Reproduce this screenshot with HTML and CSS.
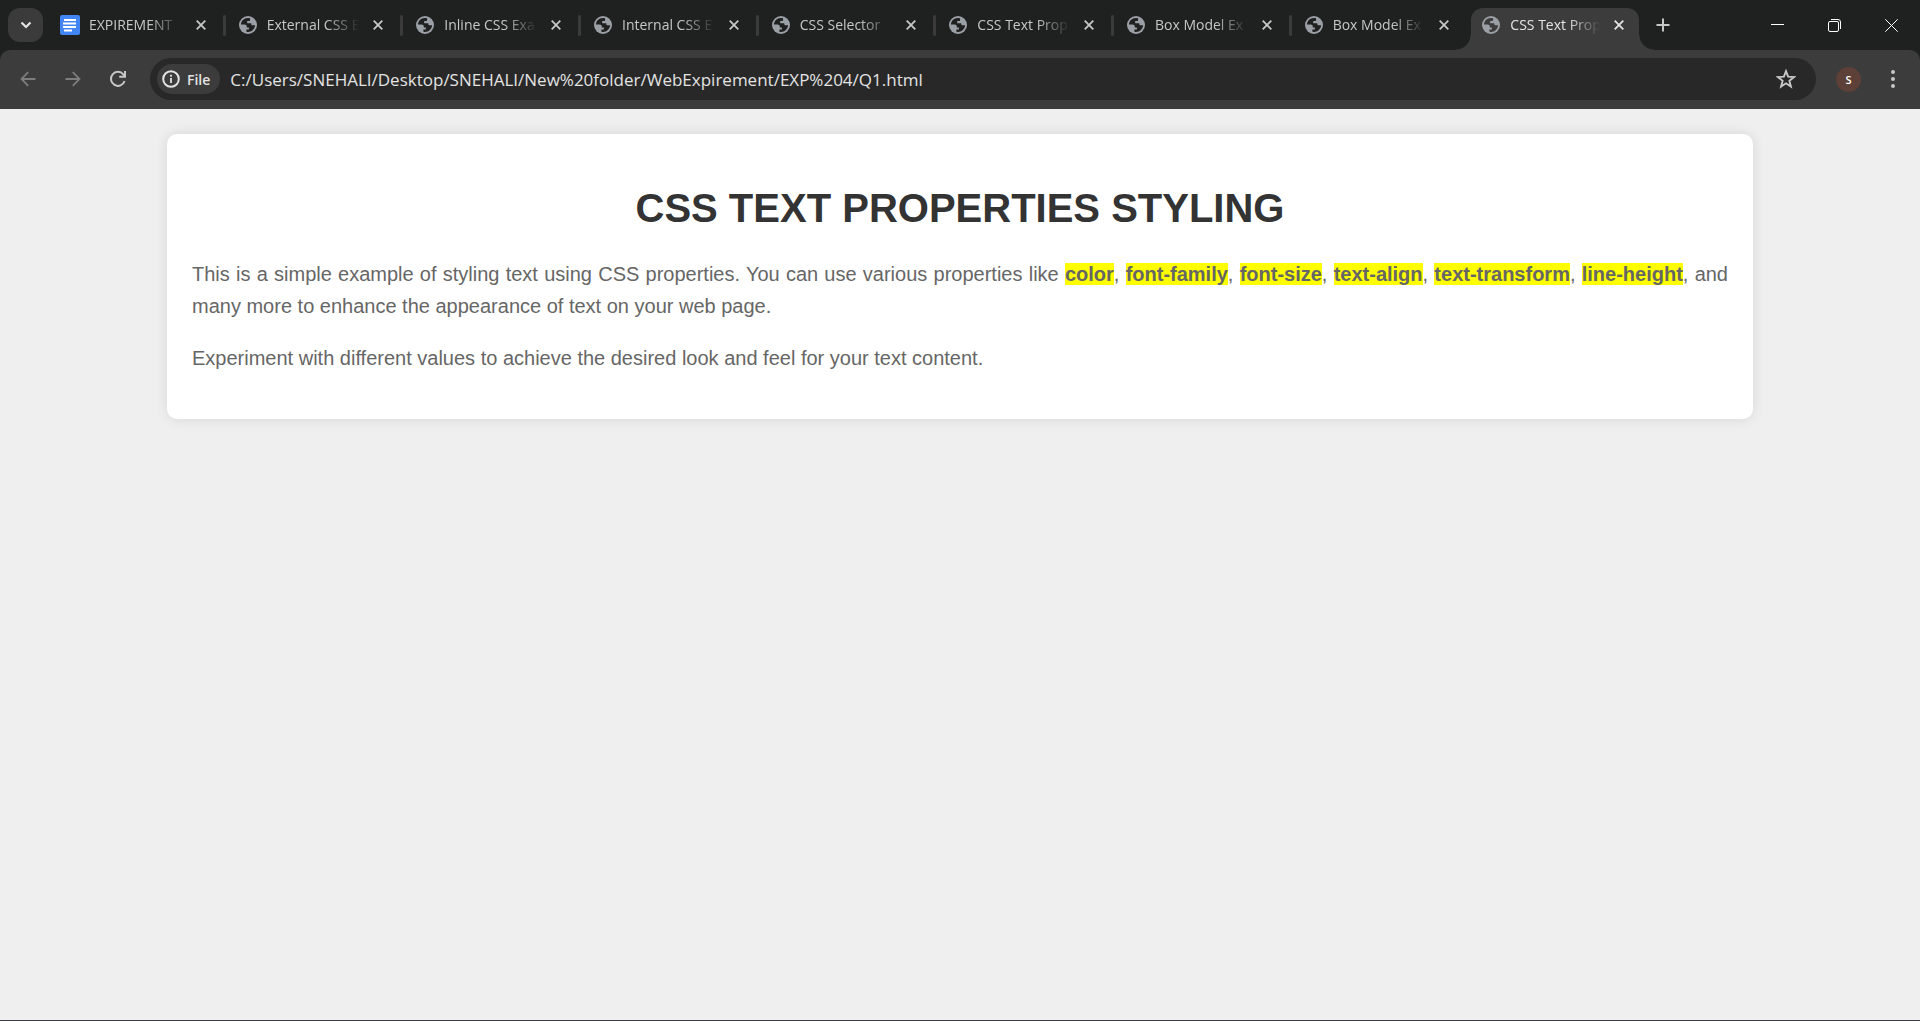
FILE: index.html
```html
<!DOCTYPE html>
<html lang="en">
<head>
<meta charset="utf-8">
<title>CSS Text Properties Styling</title>
<link rel="stylesheet" href="styles.css">
</head>
<body>
<svg class="sprite" aria-hidden="true">
  <symbol id="globe" viewBox="0 0 18 18">
    <circle cx="9" cy="9" r="9" fill="#9aa0a6"/>
    <path class="land" d="M9.2 1.9C5 1.700 2 5 1.900 8.600h3.600c1.500 0 2.300.8 2.300 2.100v.8h2.100v2.100H7.400v2.200c3.900 1.100 8.400-1.900 8.700-6.500h-2.300c-.9 0-1.500-.5-1.500-1.400v-.7H8.200V5.100h1.700c.8 0 1.200-.4 1.200-1.100V2.200Z"/>
  </symbol>
  <symbol id="cross" viewBox="0 0 10 10">
    <path d="M.7.7l8.600 8.600M9.300.7L.7 9.300" fill="none" stroke="currentColor" stroke-width="1.800"/>
  </symbol>
</svg>

<header class="browser">
  <div class="tabstrip">
    <button class="search-tabs" aria-label="Search tabs">
      <svg width="12" height="8" viewBox="0 0 12 8"><path d="M1.500 1.500L6 6l4.500-4.500" fill="none" stroke="#e3e3e3" stroke-width="2.200"/></svg>
    </button>
    <div class="tabs">
      <div class="tab">
        <svg class="favicon docs" viewBox="0 0 20 20"><rect width="20" height="20" rx="2" fill="#4285f4"/><path d="M4 5h12M3 8.500h13M3 12h13M4 15.500h8" stroke="#fff" stroke-width="2"/></svg>
        <button class="tab-title">EXPIREMENT</button>
        <button class="tab-close" aria-label="Close tab"><svg><use href="#cross"/></svg></button>
      </div>
      <div class="tab">
        <svg class="favicon"><use href="#globe"/></svg>
        <button class="tab-title">External CSS E</button>
        <button class="tab-close" aria-label="Close tab"><svg><use href="#cross"/></svg></button>
      </div>
      <div class="tab">
        <svg class="favicon"><use href="#globe"/></svg>
        <button class="tab-title">Inline CSS Exa</button>
        <button class="tab-close" aria-label="Close tab"><svg><use href="#cross"/></svg></button>
      </div>
      <div class="tab">
        <svg class="favicon"><use href="#globe"/></svg>
        <button class="tab-title">Internal CSS E</button>
        <button class="tab-close" aria-label="Close tab"><svg><use href="#cross"/></svg></button>
      </div>
      <div class="tab">
        <svg class="favicon"><use href="#globe"/></svg>
        <button class="tab-title">CSS Selector</button>
        <button class="tab-close" aria-label="Close tab"><svg><use href="#cross"/></svg></button>
      </div>
      <div class="tab">
        <svg class="favicon"><use href="#globe"/></svg>
        <button class="tab-title">CSS Text Prop</button>
        <button class="tab-close" aria-label="Close tab"><svg><use href="#cross"/></svg></button>
      </div>
      <div class="tab">
        <svg class="favicon"><use href="#globe"/></svg>
        <button class="tab-title">Box Model Ex</button>
        <button class="tab-close" aria-label="Close tab"><svg><use href="#cross"/></svg></button>
      </div>
      <div class="tab before-active">
        <svg class="favicon"><use href="#globe"/></svg>
        <button class="tab-title">Box Model Ex</button>
        <button class="tab-close" aria-label="Close tab"><svg><use href="#cross"/></svg></button>
      </div>
      <div class="tab active">
        <svg class="favicon"><use href="#globe"/></svg>
        <button class="tab-title">CSS Text Prop</button>
        <button class="tab-close" aria-label="Close tab"><svg><use href="#cross"/></svg></button>
      </div>
    </div>
    <button class="new-tab" aria-label="New tab">
      <svg width="14" height="14" viewBox="0 0 14 14"><path d="M7 .5v13M.5 7h13" stroke="#c7c7c7" stroke-width="2"/></svg>
    </button>
    <div class="window-controls">
      <button aria-label="Minimize"><svg width="13" height="14" viewBox="0 0 13 14"><path d="M0 6.500h13" stroke="#fff"/></svg></button>
      <button aria-label="Restore"><svg width="13" height="13" viewBox="0 0 13 13" fill="none" stroke="#fff"><rect x=".5" y="2.500" width="10" height="10" rx="1.500"/><path d="M3 .5h7a2.500 2.500 0 0 1 2.500 2.500v7"/></svg></button>
      <button aria-label="Close window"><svg width="13" height="13" viewBox="0 0 13 13"><path d="M.3.3l12.400 12.400M12.700.3L.3 12.700" stroke="#fff"/></svg></button>
    </div>
  </div>

  <div class="toolbar">
    <div class="nav">
      <button aria-label="Back"><svg width="16" height="16" viewBox="0 0 16 16"><path d="M15.500 8H2M8.200 1.200L1.500 8l6.700 6.800" fill="none" stroke="#7d7d7d" stroke-width="1.800"/></svg></button>
      <button aria-label="Forward"><svg width="16" height="16" viewBox="0 0 16 16"><path d="M.5 8H14M7.800 1.200L14.500 8l-6.700 6.800" fill="none" stroke="#7d7d7d" stroke-width="1.800"/></svg></button>
      <button aria-label="Reload"><svg width="18" height="18" viewBox="0 0 18 18"><path d="M15.600 11A7 7 0 1 1 14.400 4.500L15.500 5.800M16 1v5.800h-5.800" fill="none" stroke="#c7c7c7" stroke-width="2"/></svg></button>
    </div>
    <div class="omnibox">
      <button class="file-chip">
        <svg width="18" height="18" viewBox="0 0 18 18"><circle cx="9" cy="9" r="7.800" fill="none" stroke="#e3e3e3" stroke-width="2"/><path d="M9 8v5M9 4.800v1.900" stroke="#e3e3e3" stroke-width="1.800"/></svg>
        <span>File</span>
      </button>
      <input class="address" type="text" aria-label="Address" value="C:/Users/SNEHALI/Desktop/SNEHALI/New%20folder/WebExpirement/EXP%204/Q1.html">
      <button class="bookmark" aria-label="Bookmark this page"><svg width="20" height="20" viewBox="0 0 20 20"><path d="M10 2.200l2.100 5.500 5.900.4-4.600 3.700 1.500 5.700-4.900-3.200-4.900 3.200 1.500-5.700L2 8.100l5.900-.4Z" fill="none" stroke="#c7c7c7" stroke-width="1.900"/></svg></button>
    </div>
    <button class="avatar">S</button>
    <button class="menu" aria-label="Menu"><svg width="4" height="18" viewBox="0 0 4 18" fill="#c7c7c7"><circle cx="2" cy="2" r="2"/><circle cx="2" cy="9" r="2"/><circle cx="2" cy="16" r="2"/></svg></button>
  </div>
</header>

<main class="page">
  <article class="container">
    <h1>CSS Text Properties Styling</h1>
    <p>This is a simple example of styling text using CSS properties. You can use various properties like <span class="highlight">color</span>, <span class="highlight">font-family</span>, <span class="highlight">font-size</span>, <span class="highlight">text-align</span>, <span class="highlight">text-transform</span>, <span class="highlight">line-height</span>, and many more to enhance the appearance of text on your web page.</p>
    <p>Experiment with different values to achieve the desired look and feel for your text content.</p>
  </article>
</main>
</body>
</html>
```
FILE: styles.css
```css
* {
  box-sizing: border-box;
}

body {
  display: flex;
  flex-direction: column;
  min-height: 100vh;
  margin: 0;
  background: #efefef;
  border-bottom: 1px solid #3c3e47;
  font-family: "Liberation Sans", Arial, sans-serif;
}

button,
input {
  padding: 0;
  border: 0;
  background: none;
  color: inherit;
  font: inherit;
}

button {
  display: flex;
  flex: none;
  align-items: center;
  justify-content: center;
}

.sprite {
  position: absolute;
  width: 0;
  height: 0;
}

.browser {
  background: #1f2121;
  color: #e3e3e3;
  font-family: "Open Sans", "Noto Sans", sans-serif;
}

/* Tab strip */

.tabstrip {
  display: flex;
  align-items: center;
  height: 50px;
  padding-left: 8px;
}

.search-tabs {
  width: 35px;
  height: 34px;
  margin-right: 4px;
  border-radius: 12px;
  background: #3b3b3b;
}

.tabs {
  display: grid;
  flex: 1;
  grid-template-columns: repeat(9, minmax(0, 1fr));
  align-self: stretch;
  min-width: 0;
}

.tab {
  position: relative;
  display: flex;
  align-items: center;
  padding: 0 11px 0 14px;
  color: #c7c7c7;
  font-size: 14px;
}

.tab::after {
  content: "";
  position: absolute;
  top: 15px;
  right: -1px;
  width: 3px;
  height: 21px;
  border-radius: 2px;
  background: #3b3b3b;
}

.tab.before-active::after {
  display: none;
}

.favicon {
  flex: none;
  width: 18px;
  height: 18px;
  color: #1f2121;
}

.favicon.docs {
  width: 20px;
  height: 20px;
  margin: 0 -1px;
}

.land {
  fill: currentColor;
}

.tab-title {
  flex: 1;
  justify-content: flex-start;
  min-width: 0;
  height: 20px;
  margin: 0 2px 0 10px;
  overflow: hidden;
  line-height: 20px;
  white-space: nowrap;
  -webkit-mask-image: linear-gradient(to right, #000 62%, transparent 96%);
  mask-image: linear-gradient(to right, #000 62%, transparent 96%);
}

.tab-close {
  width: 26px;
  height: 26px;
}

.tab-close svg {
  width: 10px;
  height: 10px;
}

.tab.active {
  margin: 8px 7px 0 3px;
  padding: 0 7px 8px 11px;
  border-radius: 12px 12px 0 0;
  background: #3c3c3c;
  color: #e3e3e3;
}

.tab.active .favicon {
  color: #3c3c3c;
}

.tab.active::before,
.tab.active::after {
  content: "";
  position: absolute;
  top: auto;
  bottom: 0;
  width: 15px;
  height: 15px;
  border-radius: 0;
}

.tab.active::before {
  left: -15px;
  background: radial-gradient(circle at 0 0, transparent 14px, #3c3c3c 15px);
}

.tab.active::after {
  right: -15px;
  background: radial-gradient(circle at 100% 0, transparent 14px, #3c3c3c 15px);
}

.new-tab {
  width: 34px;
  height: 34px;
}

.window-controls {
  display: flex;
  flex: none;
  align-self: stretch;
  margin-left: 69px;
}

.window-controls button {
  width: 57px;
}

/* Toolbar */

.toolbar {
  display: flex;
  align-items: center;
  height: 59px;
  padding: 0 12px 1px 10px;
  border-radius: 10px 10px 0 0;
  background: #3c3c3c;
}

.nav {
  display: flex;
  gap: 10px;
  margin-right: 15px;
}

.nav button {
  width: 35px;
  height: 35px;
}

.omnibox {
  display: flex;
  flex: 1;
  align-items: center;
  min-width: 0;
  height: 42px;
  padding: 0 15px 0 7px;
  border-radius: 21px;
  background: #282828;
}

.file-chip {
  gap: 7px;
  height: 30px;
  padding: 0 10px 0 5px;
  border-radius: 15px;
  background: #3c3c3c;
  font-size: 14px;
  font-weight: 600;
}

.address {
  flex: 1;
  min-width: 0;
  height: 34px;
  margin-left: 10px;
  font-size: 17px;
}

.bookmark {
  width: 30px;
  height: 30px;
}

.avatar {
  width: 25px;
  height: 25px;
  margin-left: 20px;
  border-radius: 50%;
  background: #5d4037;
  color: #fff;
  font-size: 11px;
  font-weight: 600;
}

.menu {
  width: 30px;
  height: 30px;
  margin-left: 17px;
}

/* Page */

.page {
  flex: 1;
  padding: 25px 0;
}

.container {
  box-sizing: content-box;
  width: 80%;
  margin: 0 auto;
  padding: 25px;
  border-radius: 10px;
  background: #fff;
  box-shadow: 0 0 13px rgba(0, 0, 0, 0.1);
}

h1 {
  margin: 26px 0 27px;
  color: #333;
  font-size: 40px;
  line-height: 46px;
  text-align: center;
  text-transform: uppercase;
}

p {
  margin: 20px 0;
  color: #666;
  font-size: 20px;
  line-height: 32px;
  text-align: justify;
}

.highlight {
  background: #ff0;
  font-weight: bold;
}
```
